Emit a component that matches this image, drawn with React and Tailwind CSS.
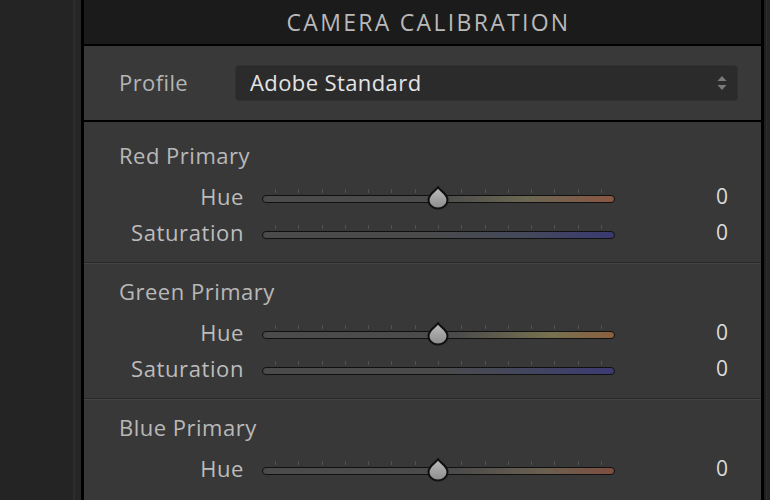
import React from "react";

const font = { fontFamily: '"Open Sans", "Noto Sans", sans-serif' };

function Thumb() {
  return (
    <svg width="26" height="25" viewBox="0 0 26 25" className="absolute left-[163px] top-[-1px]">
      <defs>
        <linearGradient id="tg" x1="0" y1="0" x2="0" y2="1">
          <stop offset="0" stopColor="#bdbdbd" />
          <stop offset="1" stopColor="#8c8c8c" />
        </linearGradient>
      </defs>
      <path
        d="M13 2 C14.5 5.5 22.5 8.5 22.5 15 A9.5 8.5 0 0 1 3.5 15 C3.5 8.5 11.5 5.5 13 2 Z"
        fill="url(#tg)"
        stroke="#111"
        strokeWidth="2"
        strokeLinejoin="round"
      />
    </svg>
  );
}

function Slider({ gradient, thumb }) {
  const ticks = Array.from({ length: 15 });
  return (
    <div className="relative w-[353px] h-[24px] shrink-0">
      <div className="flex justify-between px-[13px] pt-[3px]">
        {ticks.map((_, i) => (
          <div key={i} className="w-px h-[4px] bg-[#525252]" />
        ))}
      </div>
      <div
        className="absolute left-0 right-0 top-[9px] h-[8px] rounded-full border-[1.5px] border-[#111]"
        style={{ background: gradient }}
      />
      {thumb && <Thumb />}
    </div>
  );
}

function Row({ label, gradient, thumb }) {
  return (
    <div className="flex items-center h-[36px]">
      <div className="w-[160px] shrink-0 text-right text-[22px] tracking-[0.6px] text-[#bcbcbc] leading-none pb-[2px]">{label}</div>
      <div className="w-[18px] shrink-0" />
      <div className="pt-[2px]">
        <Slider gradient={gradient} thumb={thumb} />
      </div>
      <div className="flex-1 text-right pr-[33px] text-[21px] text-[#dcdcdc] leading-none pb-[1px]">0</div>
    </div>
  );
}

function Section({ title, rows, first, divider }) {
  return (
    <div
      className={
        (first ? "pt-[20px] " : "pt-[15px] ") +
        "pb-[11px] " +
        (divider ? "border-b border-b-[#282828] shadow-[0_1px_0_#444]" : "")
      }
    >
      <div className="pl-[35px] h-[28px] flex items-center text-[22px] tracking-[0.5px] text-[#b8b8b8] leading-none pb-[2px]">{title}</div>
      <div className="h-[9px]" />
      {rows.map((r, i) => (
        <Row key={i} {...r} />
      ))}
    </div>
  );
}

const G = "#4b4b4b";

export default function App() {
  return (
    <div className="flex w-[770px] h-[500px] overflow-hidden bg-[#232323]" style={font}>
      <div className="w-[81px] shrink-0 flex">
        <div className="w-[73px] bg-[#242424]" />
        <div className="w-[2px] bg-[#2c2c2c]" />
        <div className="flex-1 bg-[#262626]" />
      </div>
      <div className="w-[683px] shrink-0 border-x-[3px] border-black bg-[#383838] flex flex-col">
        <div className="h-[46px] shrink-0 bg-[#1b1b1b] border-b-2 border-black flex items-center justify-center pl-[12px]">
          <span className="text-[23px] tracking-[2.3px] text-[#b9b9b9] leading-none">CAMERA CALIBRATION</span>
        </div>
        <div className="h-[76px] shrink-0 border-b-2 border-black bg-[#393939] flex items-center pl-[35px] pr-[23px]">
          <div className="w-[116px] shrink-0 text-[22px] tracking-[0.4px] text-[#b4b4b4] leading-none pb-[2px]">Profile</div>
          <div className="flex-1 h-[36px] rounded-[4px] bg-[#2b2b2b] border border-[#303030] flex items-center pl-[14px] pr-[10px]">
            <span className="flex-1 text-[22px] tracking-[0.4px] text-[#e4e4e4] leading-none pb-[2px]">Adobe Standard</span>
            <svg width="10" height="16" viewBox="0 0 10 16">
              <path d="M5 1 L9.5 6 L0.5 6 Z" fill="#7a7a7a" />
              <path d="M5 15 L9.5 10 L0.5 10 Z" fill="#7a7a7a" />
            </svg>
          </div>
        </div>
        <Section
          first
          divider
          title="Red Primary"
          rows={[
            {
              label: "Hue",
              thumb: true,
              gradient: `linear-gradient(to right, ${G} 0%, ${G} 50%, #6a6752 75%, #8a5644 100%)`,
            },
            {
              label: "Saturation",
              gradient: `linear-gradient(to right, ${G} 0%, ${G} 45%, #44485a 75%, #3a3a72 100%)`,
            },
          ]}
        />
        <Section
          divider
          title="Green Primary"
          rows={[
            {
              label: "Hue",
              thumb: true,
              gradient: `linear-gradient(to right, ${G} 0%, ${G} 55%, #77714f 82%, #8a6040 100%)`,
            },
            {
              label: "Saturation",
              gradient: `linear-gradient(to right, ${G} 0%, ${G} 50%, #43465e 75%, #3d3a74 100%)`,
            },
          ]}
        />
        <Section
          title="Blue Primary"
          rows={[
            {
              label: "Hue",
              thumb: true,
              gradient: `linear-gradient(to right, ${G} 0%, ${G} 55%, #6a6050 80%, #7e4e40 100%)`,
            },
          ]}
        />
      </div>
      <div className="flex-1 flex">
        <div className="w-[2px] bg-[#1e1e1e]" />
        <div className="w-[1px] bg-[#2e2e2e]" />
        <div className="flex-1 bg-[#242424]" />
      </div>
    </div>
  );
}
